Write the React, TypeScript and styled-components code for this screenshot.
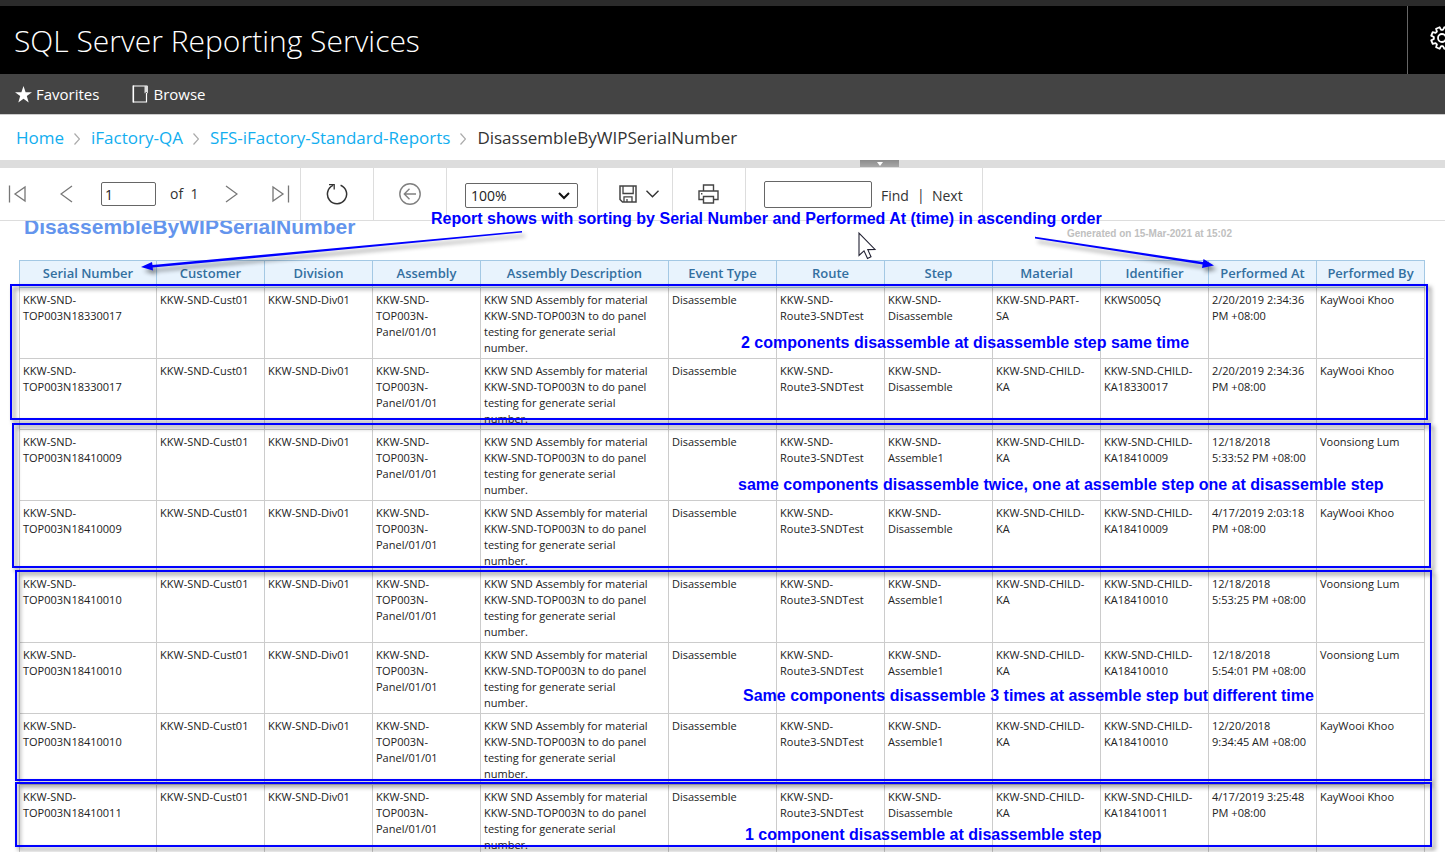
import React from "react";
import styled, { createGlobalStyle, css } from "styled-components";

const UI_FONT = `"Open Sans", "Noto Sans", sans-serif`;
const NOTE_FONT = `"Liberation Sans", Arial, sans-serif`;

const GlobalStyle = createGlobalStyle`
  *, *::before, *::after { box-sizing: border-box; }
  html, body { margin: 0; overflow: hidden; background: #fff; }
  body { font-family: ${UI_FONT}; color: #333; }
  svg { display: block; flex: none; }
`;

const Page = styled.div`
  position: relative;
  display: flex;
  flex-direction: column;
  height: 100vh;
  overflow: hidden;
`;

/* ---------- header ---------- */

const Brand = styled.header`
  flex: none;
  display: flex;
  justify-content: space-between;
  height: 74px;
  border-top: 6px solid #2b2b2b;
  background: #000;
  overflow: hidden;
`;

const BrandTitle = styled.h1`
  margin: 0;
  padding-left: 14px;
  font-size: 30px;
  font-weight: 300;
  line-height: 70px;
  color: #fff;
  white-space: nowrap;
`;

const SettingsButton = styled.button`
  display: flex;
  align-items: center;
  width: 38px;
  padding: 0 0 4px 22px;
  border: 0;
  border-left: 1px solid #666;
  background: none;
`;

const Nav = styled.nav`
  flex: none;
  display: flex;
  align-items: center;
  gap: 33px;
  height: 41px;
  padding-left: 15px;
  border-bottom: 1px solid #ccc;
  background: #444;
`;

const NavLink = styled.a`
  display: flex;
  align-items: center;
  gap: 4px;
  font-size: 15px;
  line-height: 20px;
  color: #fff;
  text-decoration: none;
`;

const Breadcrumb = styled.ol`
  flex: none;
  display: flex;
  align-items: center;
  height: 45px;
  margin: 0;
  padding: 0 0 0 16px;
  list-style: none;
  font-size: 17px;
  line-height: 24px;
  color: #333;
`;

const Crumb = styled.li`
  display: flex;
  align-items: center;
`;

const CrumbLink = styled.a`
  color: #12aeef;
  text-decoration: none;
`;

const CrumbArrow = styled.svg`
  margin: 2px 11px 0 10px;
`;

const Splitter = styled.div`
  flex: none;
  display: flex;
  justify-content: center;
  height: 8px;
  padding-left: 314px;
  background: #ddd;
`;

const Grip = styled.button`
  display: flex;
  justify-content: center;
  width: 39px;
  height: 7px;
  padding: 2px 0 0;
  border: 0;
  background: linear-gradient(#8c8c8c, #a8a8a8);
`;

/* ---------- viewer toolbar ---------- */

const Toolbar = styled.div`
  flex: none;
  display: flex;
  height: 53px;
  border-bottom: 1px solid #ddd;
  background: #fff;
  font-size: 14px;
  line-height: 20px;
`;

const Group = styled.div<{ $width: number; $pad?: number }>`
  display: flex;
  align-items: center;
  justify-content: ${(p) => (p.$pad ? "flex-start" : "center")};
  width: ${(p) => p.$width}px;
  padding-left: ${(p) => p.$pad ?? 0}px;
  border-right: 1px solid #ddd;
`;

const IconButton = styled.button<{ $gap?: number }>`
  display: flex;
  align-items: center;
  gap: 9px;
  margin-right: ${(p) => p.$gap ?? 0}px;
  padding: 0;
  border: 0;
  background: none;
`;

const field = css`
  border: 1px solid #666;
  border-radius: 2px;
  background: #fff;
  color: #222;
  font-family: ${UI_FONT};
  font-size: 14px;
`;

const PageInput = styled.input`
  ${field}
  width: 55px;
  height: 24px;
  padding: 0 3px;
`;

const PageCount = styled.span`
  margin: 0 27px 0 14px;
  white-space: pre;
`;

const ZoomBox = styled.div`
  position: relative;
  margin-top: 3px;
`;

const ZoomSelect = styled.select`
  ${field}
  display: block;
  appearance: none;
  width: 113px;
  height: 25px;
  padding: 0 5px;
`;

const ZoomArrow = styled.svg`
  position: absolute;
  right: 8px;
  top: 9px;
  pointer-events: none;
`;

const FindInput = styled.input`
  ${field}
  width: 108px;
  height: 27px;
`;

const TextButton = styled.button`
  margin: 3px 0 0 9px;
  padding: 0;
  border: 0;
  background: none;
  font-family: ${UI_FONT};
  font-size: 14px;
  line-height: 20px;
  color: #333;
`;

const Bar = styled.span`
  margin: 2px 0 0 8px;
  width: 6px;
  text-align: center;
`;

/* ---------- report ---------- */

const Viewport = styled.main`
  flex: 1;
  min-height: 0;
  overflow: hidden;
`;

const Report = styled.div`
  margin-top: -6px;
  padding: 0 20px 0 19px;
`;

const ReportHead = styled.div`
  display: flex;
  justify-content: space-between;
  height: 45px;
  padding: 0 193px 0 5px;
  font-family: ${NOTE_FONT};
`;

const ReportTitle = styled.h2`
  margin: 0;
  font-size: 21px;
  line-height: 24px;
  color: #6495ed;
`;

const Generated = styled.p`
  margin: 0;
  padding-top: 13px;
  font-size: 10px;
  font-weight: 700;
  line-height: 12px;
  color: #c0c0c0;
`;

const Table = styled.table`
  width: 100%;
  table-layout: fixed;
  border-collapse: separate;
  border-spacing: 0;
`;

const HeadCell = styled.th<{ $width: number }>`
  width: ${(p) => p.$width}px;
  height: 28px;
  padding: 0 0 2px;
  border: 1px solid #a3c8e4;
  border-left-width: 0;
  background: #e8f3fd;
  font-size: 13px;
  font-weight: 600;
  line-height: 20px;
  color: #336fa0;
  white-space: nowrap;
  &:first-child { border-left-width: 1px; }
`;

const Cell = styled.td`
  height: 71px;
  padding: 4px 3px 2px;
  border: 1px solid #ccc;
  border-width: 0 1px 1px 0;
  font-size: 11px;
  line-height: 16px;
  color: #222;
  vertical-align: top;
  white-space: pre;
  &:first-child { border-left-width: 1px; }
`;

/* ---------- annotations drawn over the page ---------- */

const Frame = styled.div<{ $left: number; $right: number; $top: number; $height: number }>`
  position: absolute;
  left: ${(p) => p.$left}px;
  right: ${(p) => p.$right}px;
  top: ${(p) => p.$top}px;
  height: ${(p) => p.$height}px;
  border: 2px solid #00f;
  filter: drop-shadow(3px 3px 2px rgba(0, 0, 0, 0.5));
  pointer-events: none;
`;

const Note = styled.p<{ $left: number; $top: number }>`
  position: absolute;
  left: ${(p) => p.$left}px;
  top: ${(p) => p.$top}px;
  margin: 0;
  font-family: ${NOTE_FONT};
  font-size: 16px;
  font-weight: 700;
  line-height: 20px;
  color: #00f;
  white-space: nowrap;
  pointer-events: none;
`;

const Overlay = styled.svg<{ $left: number; $top: number }>`
  position: absolute;
  left: ${(p) => p.$left}px;
  top: ${(p) => p.$top}px;
  overflow: visible;
  pointer-events: none;
`;

const ArrowShape = styled.g`
  filter: drop-shadow(3px 4px 2px rgba(0, 0, 0, 0.45));
`;

/* ---------- data ---------- */

const COLUMNS: [string, number][] = [
  ["Serial Number", 138],
  ["Customer", 108],
  ["Division", 108],
  ["Assembly", 108],
  ["Assembly Description", 188],
  ["Event Type", 108],
  ["Route", 108],
  ["Step", 108],
  ["Material", 108],
  ["Identifier", 108],
  ["Performed At", 108],
  ["Performed By", 108],
];

const DESCRIPTION =
  "KKW SND Assembly for material\nKKW-SND-TOP003N to do panel\ntesting for generate serial\nnumber.";

type Event = { serial: string; step: string; material?: string; id: string; at: string; by: string };

const KW = "KayWooi Khoo";
const VL = "Voonsiong Lum";

const EVENTS: Event[] = [
  { serial: "18330017", step: "Disassemble", material: "PART-\nSA", id: "KKWS005Q", at: "2/20/2019 2:34:36\nPM +08:00", by: KW },
  { serial: "18330017", step: "Disassemble", id: "KKW-SND-CHILD-\nKA18330017", at: "2/20/2019 2:34:36\nPM +08:00", by: KW },
  { serial: "18410009", step: "Assemble1", id: "KKW-SND-CHILD-\nKA18410009", at: "12/18/2018\n5:33:52 PM +08:00", by: VL },
  { serial: "18410009", step: "Disassemble", id: "KKW-SND-CHILD-\nKA18410009", at: "4/17/2019 2:03:18\nPM +08:00", by: KW },
  { serial: "18410010", step: "Assemble1", id: "KKW-SND-CHILD-\nKA18410010", at: "12/18/2018\n5:53:25 PM +08:00", by: VL },
  { serial: "18410010", step: "Assemble1", id: "KKW-SND-CHILD-\nKA18410010", at: "12/18/2018\n5:54:01 PM +08:00", by: VL },
  { serial: "18410010", step: "Assemble1", id: "KKW-SND-CHILD-\nKA18410010", at: "12/20/2018\n9:34:45 AM +08:00", by: KW },
  { serial: "18410011", step: "Disassemble", id: "KKW-SND-CHILD-\nKA18410011", at: "4/17/2019 3:25:48\nPM +08:00", by: KW },
];

const cellsOf = (e: Event) => [
  `KKW-SND-\nTOP003N${e.serial}`,
  "KKW-SND-Cust01",
  "KKW-SND-Div01",
  "KKW-SND-\nTOP003N-\nPanel/01/01",
  DESCRIPTION,
  "Disassemble",
  "KKW-SND-\nRoute3-SNDTest",
  `KKW-SND-\n${e.step}`,
  `KKW-SND-${e.material ?? "CHILD-\nKA"}`,
  e.id,
  e.at,
  e.by,
];

/* ---------- icons ---------- */

const gearPath = () => {
  const points: string[] = [];
  for (let i = 0; i < 8; i++) {
    const mid = 22.5 + i * 45;
    for (const [offset, radius] of [[-16, 8.2], [-10, 11], [10, 11], [16, 8.2]]) {
      const a = ((mid + offset) * Math.PI) / 180;
      points.push(`${(12 + radius * Math.cos(a)).toFixed(2)} ${(12 + radius * Math.sin(a)).toFixed(2)}`);
    }
  }
  return `M${points.join("L")}Z`;
};

const GearIcon = () => (
  <svg width="24" height="24" viewBox="0 0 24 24" fill="none" stroke="#fff" strokeWidth="1.8" strokeLinejoin="round">
    <path d={gearPath()} />
    <circle cx="12" cy="12" r="4" />
  </svg>
);

const StarIcon = () => (
  <svg width="17" height="17" viewBox="0 0 17 17" fill="#fff">
    <path d="M8.5 0L10.6 6.2H17L11.8 10.1L13.7 16.6L8.5 12.7L3.3 16.6L5.2 10.1L0 6.2H6.4Z" />
  </svg>
);

const BookIcon = () => (
  <svg width="17" height="18" viewBox="0 0 17 18" fill="none" stroke="#fff">
    <path d="M1.3 0.5V17.5" strokeWidth="1.6" />
    <path d="M1 1H15.5M14.5 8V17H1" strokeWidth="1.2" />
    <path d="M12.5 1H16V8.5L14.2 7L12.5 8.5Z" fill="#ddd" stroke="none" />
  </svg>
);

const PrevIcon = () => (
  <svg width="13" height="18" viewBox="0 0 13 18" fill="none" stroke="#777" strokeWidth="1.3">
    <path d="M12 1L1 9L12 17" />
  </svg>
);

const NextIcon = () => (
  <svg width="13" height="18" viewBox="0 0 13 18" fill="none" stroke="#777" strokeWidth="1.3">
    <path d="M1 1L12 9L1 17" />
  </svg>
);

const FirstIcon = () => (
  <svg width="18" height="18" viewBox="0 0 18 18" fill="none" stroke="#777" strokeWidth="1.3">
    <path d="M1.5 0.5V17.5M17 2V16L7 9Z" />
  </svg>
);

const LastIcon = () => (
  <svg width="18" height="18" viewBox="0 0 18 18" fill="none" stroke="#777" strokeWidth="1.3">
    <path d="M16.5 0.5V17.5M1 2V16L11 9Z" />
  </svg>
);

const RefreshIcon = () => (
  <svg width="22" height="22" viewBox="0 0 22 22" fill="none" stroke="#333" strokeWidth="1.5">
    <path d="M14.6 2.2A9.6 9.6 0 1 1 7 2.4" />
    <path d="M3 1.6H8.2V6.6" strokeWidth="1.3" />
  </svg>
);

const BackIcon = () => (
  <svg width="22" height="22" viewBox="0 0 22 22" fill="none" stroke="#808080" strokeWidth="1.4">
    <circle cx="11" cy="11" r="10.2" />
    <path d="M17 11H5.5M10.5 5.8L5.3 11L10.5 16.2" />
  </svg>
);

const SaveIcon = () => (
  <svg width="18" height="18" viewBox="0 0 18 18" fill="none" stroke="#444" strokeWidth="1.5">
    <path d="M1 1H17V17H3.5L1 14.5Z" />
    <path d="M4 1V8.5H14.2V1M5 17V11.8H13V17M8 17V14" strokeWidth="1.3" />
  </svg>
);

const ChevronDown = () => (
  <svg width="13" height="8" viewBox="0 0 13 8" fill="none" stroke="#333" strokeWidth="1.4">
    <path d="M0.5 0.8L6.5 6.8L12.5 0.8" />
  </svg>
);

const PrintIcon = () => (
  <svg width="21" height="20" viewBox="0 0 21 20" fill="none" stroke="#444" strokeWidth="1.4">
    <path d="M5.5 7V1H15.5V7M5.5 15.5H1V7H20V15.5H15.5" />
    <path d="M5.5 12.5H15.5V19H5.5Z" />
    <path d="M3 9.8H4.4" />
  </svg>
);

const Chevron = () => (
  <CrumbArrow width="6" height="12" viewBox="0 0 6 12" fill="none" stroke="#aaa" strokeWidth="1.2">
    <path d="M0.5 0.5L5.5 6L0.5 11.5" />
  </CrumbArrow>
);

const CRUMBS = ["Home", "iFactory-QA", "SFS-iFactory-Standard-Reports"];

export default function App() {
  return (
    <Page>
      <GlobalStyle />
      <Brand>
        <BrandTitle>SQL Server Reporting Services</BrandTitle>
        <SettingsButton aria-label="Settings">
          <GearIcon />
        </SettingsButton>
      </Brand>
      <Nav>
        <NavLink href="#favorites">
          <StarIcon />
          Favorites
        </NavLink>
        <NavLink href="#browse">
          <BookIcon />
          Browse
        </NavLink>
      </Nav>
      <Breadcrumb>
        {CRUMBS.map((name) => (
          <Crumb key={name}>
            <CrumbLink href="#folder">{name}</CrumbLink>
            <Chevron />
          </Crumb>
        ))}
        <Crumb aria-current="page">DisassembleByWIPSerialNumber</Crumb>
      </Breadcrumb>
      <Splitter>
        <Grip aria-label="Toggle parameters">
          <svg width="6" height="4" viewBox="0 0 6 4" fill="#fff">
            <path d="M0 0H6L3 4Z" />
          </svg>
        </Grip>
      </Splitter>

      <Toolbar role="toolbar" aria-label="Report viewer">
        <Group $width={301} $pad={8}>
          <IconButton $gap={34} aria-label="First page"><FirstIcon /></IconButton>
          <IconButton $gap={28} aria-label="Previous page"><PrevIcon /></IconButton>
          <PageInput aria-label="Page number" defaultValue="1" />
          <PageCount>of  1</PageCount>
          <IconButton $gap={34} aria-label="Next page"><NextIcon /></IconButton>
          <IconButton aria-label="Last page"><LastIcon /></IconButton>
        </Group>
        <Group $width={73}>
          <IconButton aria-label="Refresh"><RefreshIcon /></IconButton>
        </Group>
        <Group $width={73}>
          <IconButton aria-label="Back"><BackIcon /></IconButton>
        </Group>
        <Group $width={151} $pad={18}>
          <ZoomBox>
            <ZoomSelect aria-label="Zoom" defaultValue="100%">
              <option>100%</option>
            </ZoomSelect>
            <ZoomArrow width="12" height="8" viewBox="0 0 12 8" fill="none" stroke="#111" strokeWidth="2">
              <path d="M1 1L6 6L11 1" />
            </ZoomArrow>
          </ZoomBox>
        </Group>
        <Group $width={75} $pad={21}>
          <IconButton aria-label="Export"><SaveIcon /><ChevronDown /></IconButton>
        </Group>
        <Group $width={73} $pad={25}>
          <IconButton aria-label="Print"><PrintIcon /></IconButton>
        </Group>
        <Group $width={237} $pad={18}>
          <FindInput aria-label="Find text in report" />
          <TextButton>Find</TextButton>
          <Bar>|</Bar>
          <TextButton>Next</TextButton>
        </Group>
      </Toolbar>

      <Viewport>
        <Report>
          <ReportHead>
            <ReportTitle>DisassembleByWIPSerialNumber</ReportTitle>
            <Generated>Generated on 15-Mar-2021 at 15:02</Generated>
          </ReportHead>
          <Table>
            <thead>
              <tr>
                {COLUMNS.map(([name, width]) => (
                  <HeadCell key={name} $width={width} scope="col">{name}</HeadCell>
                ))}
              </tr>
            </thead>
            <tbody>
              {EVENTS.map((event, row) => (
                <tr key={row}>
                  {cellsOf(event).map((text, col) => (
                    <Cell key={col}>{text}</Cell>
                  ))}
                </tr>
              ))}
            </tbody>
          </Table>
        </Report>
      </Viewport>

      <Frame $left={10} $right={17} $top={284} $height={136} />
      <Frame $left={12} $right={14} $top={423} $height={145} />
      <Frame $left={15} $right={13} $top={570} $height={211} />
      <Frame $left={15} $right={13} $top={782} $height={65} />

      <Overlay $left={141} $top={231} width="382" height="41" viewBox="0 0 382 41" fill="#00f">
        <ArrowShape>
          <path d="M0 36L11 31L11.5 34L381 0V1.6L11.7 36.6L12 39.5Z" />
        </ArrowShape>
      </Overlay>
      <Overlay $left={1034} $top={236} width="180" height="34" viewBox="0 0 180 34" fill="#00f">
        <ArrowShape>
          <path d="M1 0.8L169 26L169.5 23L180 29.5L168 32L168.6 28.4L1 2.4Z" />
        </ArrowShape>
      </Overlay>

      <Note $left={431} $top={209}>
        Report shows with sorting by Serial Number and Performed At (time) in ascending order
      </Note>
      <Note $left={741} $top={333}>2 components disassemble at disassemble step same time</Note>
      <Note $left={738} $top={475}>same components disassemble twice, one at assemble step one at disassemble step</Note>
      <Note $left={743} $top={686}>Same components disassemble 3 times at assemble step but different time</Note>
      <Note $left={745} $top={825}>1 component disassemble at disassemble step</Note>

      <Overlay $left={858} $top={232} width="18" height="27" viewBox="0 0 18 27" fill="#fff" stroke="#223" strokeWidth="1.1">
        <path d="M1 1V23.5L6 18.8L9.5 26.4L13 24.8L9.8 17.6L17 17.4Z" />
      </Overlay>
    </Page>
  );
}
